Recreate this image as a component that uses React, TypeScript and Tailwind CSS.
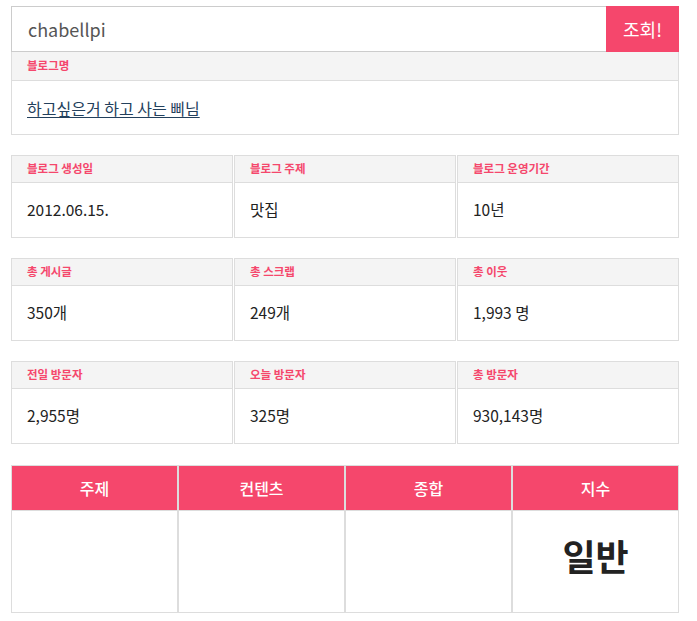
const PINK = "text-[#f5476c]";

const rows = [
  [
    { label: "블로그 생성일", value: "2012.06.15." },
    { label: "블로그 주제", value: "맛집" },
    { label: "블로그 운영기간", value: "10년" },
  ],
  [
    { label: "총 게시글", value: "350개" },
    { label: "총 스크랩", value: "249개" },
    { label: "총 이웃", value: "1,993 명" },
  ],
  [
    { label: "전일 방문자", value: "2,955명" },
    { label: "오늘 방문자", value: "325명" },
    { label: "총 방문자", value: "930,143명" },
  ],
];

const indexCols = [
  { title: "주제", value: "" },
  { title: "컨텐츠", value: "" },
  { title: "종합", value: "" },
  { title: "지수", value: "일반" },
];

function StatCard({ label, value }: { label: string; value: string }) {
  return (
    <div className="border border-[#ddd] bg-white">
      <div className="h-[27px] bg-[#f4f4f4] border-b border-[#ddd] pl-[15px] flex items-center">
        <span className={`text-[11.5px] font-bold ${PINK}`}>{label}</span>
      </div>
      <div className="h-[54px] pl-[15px] flex items-center text-[15.5px] text-[#222]">{value}</div>
    </div>
  );
}

export default function App() {
  return (
    <div
      className="min-h-screen bg-white"
      style={{ fontFamily: '"Noto Sans CJK KR", "Noto Sans", sans-serif' }}
    >
      <div className="ml-[11px] w-[668px] pt-[6px]">
        {/* search */}
        <div className="flex h-[46px]">
          <div className="flex-1 border border-[#ccc] border-r-0 flex items-center pl-[16px] text-[18px] text-[#555]">
            chabellpi
          </div>
          <button className="w-[73px] bg-[#f5476c] text-white text-[18px]">조회!</button>
        </div>

        {/* blog name */}
        <div className="border border-t-0 border-[#ddd]">
          <div className="h-[29px] bg-[#f4f4f4] border-b border-[#ddd] pl-[15px] flex items-center">
            <span className={`text-[11.5px] font-bold ${PINK}`}>블로그명</span>
          </div>
          <div className="h-[53px] pl-[15px] flex items-center">
            <a className="text-[16px] text-[#23405c] underline underline-offset-2">하고싶은거 하고 사는 삐님</a>
          </div>
        </div>

        {rows.map((row, i) => (
          <div key={i} className="grid grid-cols-3 gap-px mt-[20px]">
            {row.map((c) => (
              <StatCard key={c.label} label={c.label} value={c.value} />
            ))}
          </div>
        ))}

        {/* index table */}
        <div className="mt-[21px] grid grid-cols-4 gap-[2px] bg-[#ddd] p-px">
          {indexCols.map((c) => (
            <div key={c.title} className="bg-white flex flex-col">
              <div className="h-[45px] bg-[#f5476c] flex items-center justify-center text-white text-[16px] font-medium border-b border-[#ddd]">
                {c.title}
              </div>
              <div className="h-[101px] pb-[14px] flex items-center justify-center text-[36px] font-bold text-[#222]">
                {c.value}
              </div>
            </div>
          ))}
        </div>
      </div>
    </div>
  );
}
